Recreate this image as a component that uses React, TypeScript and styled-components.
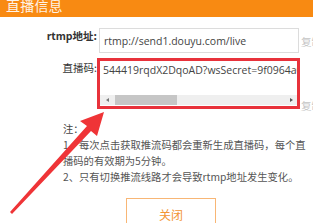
import React from "react";
import styled, { createGlobalStyle } from "styled-components";

const Global = createGlobalStyle`
  html, body { margin: 0; padding: 0; background: #fff; }
  body { width: 313px; height: 223px; overflow: hidden; }
  * { box-sizing: border-box; }
`;

const Page = styled.div`
  position: relative;
  width: 313px;
  height: 223px;
  overflow: hidden;
  background: #fff;
  font-family: "Noto Sans CJK SC", "Open Sans", sans-serif;
`;

const Header = styled.div`
  height: 17px;
  background: #f88a12;
  display: flex;
  align-items: flex-end;
  padding: 0 0 5px 6px;
  overflow: hidden;
`;

const HeaderTitle = styled.span`
  color: #fff3e6;
  font-size: 14px;
  line-height: 14px;
  letter-spacing: 0.2px;
`;

const Form = styled.div`
  display: grid;
  grid-template-columns: 97px 200px 16px;
  column-gap: 2px;
  row-gap: 7px;
  margin-top: 11px;
`;

const Label = styled.div<{ $bold?: boolean }>`
  text-align: right;
  font-size: 10.5px;
  line-height: 14px;
  padding-top: 1px;
  color: #333;
  font-weight: ${(p) => (p.$bold ? 700 : 400)};
  white-space: nowrap;
`;

const Input = styled.div`
  height: 25px;
  border: 1px solid #dcdcdc;
  padding: 0 4px;
  display: flex;
  align-items: center;
  font-family: "Open Sans", "Noto Sans CJK SC", sans-serif;
  font-size: 10.5px;
  color: #444;
  white-space: nowrap;
  overflow: hidden;
`;

const TextArea = styled.div`
  height: 47px;
  border: 1px solid #dcdcdc;
  display: flex;
  flex-direction: column;
  justify-content: space-between;
  overflow: hidden;
`;

const AreaText = styled.div`
  padding: 2px 3px 0;
  font-family: "Open Sans", "Noto Sans CJK SC", sans-serif;
  font-size: 10.5px;
  color: #444;
  white-space: nowrap;
  overflow: hidden;
`;

const ScrollBar = styled.div`
  height: 10px;
  margin-bottom: 1px;
  display: flex;
  align-items: stretch;
  background: #efefef;
`;

const ScrollButton = styled.div<{ $dir: "left" | "right" }>`
  width: 14px;
  display: flex;
  align-items: center;
  justify-content: center;
  &::before {
    content: "";
    width: 0;
    height: 0;
    border-top: 2.5px solid transparent;
    border-bottom: 2.5px solid transparent;
    ${(p) =>
      p.$dir === "left"
        ? "border-right: 3px solid #777;"
        : "border-left: 3px solid #555;"}
  }
`;

const ScrollTrack = styled.div`
  flex: 1;
  display: flex;
  align-items: stretch;
  padding: 0 1px;
`;

const ScrollThumb = styled.div`
  width: 62px;
  background: #c6c6c6;
`;

const Copy = styled.div<{ $top: number }>`
  font-size: 10.5px;
  color: #c4c4c4;
  padding-top: ${(p) => p.$top}px;
  white-space: nowrap;
`;

const Notes = styled.div`
  margin: 8px 0 0 63px;
  width: 246px;
  font-size: 10.3px;
  line-height: 16px;
  color: #555;
`;

const NoteTitle = styled.div`
  color: #444;
`;

const Footer = styled.div`
  display: flex;
  padding-left: 126px;
  margin-top: 13px;
`;

const CloseButton = styled.button`
  width: 90px;
  height: 32px;
  border: 1px solid #f8b675;
  background: #fff;
  color: #f39533;
  font-family: "Noto Sans CJK SC", sans-serif;
  font-size: 12px;
  padding: 0;
`;

const Highlight = styled.div`
  position: absolute;
  left: 97px;
  top: 58px;
  width: 203px;
  height: 51px;
  border: 3px solid #e8323b;
  pointer-events: none;
`;

const ArrowSvg = styled.svg`
  position: absolute;
  left: 0;
  top: 0;
  pointer-events: none;
`;

export default function App() {
  return (
    <Page>
      <Global />
      <Header>
        <HeaderTitle>直播信息</HeaderTitle>
      </Header>
      <Form>
        <Label $bold>rtmp地址:</Label>
        <Input>rtmp://send1.douyu.com/live</Input>
        <Copy $top={6}>复制</Copy>
        <Label>直播码:</Label>
        <TextArea>
          <AreaText>544419rqdX2DqoAD?wsSecret=9f0964a0c1</AreaText>
          <ScrollBar>
            <ScrollButton $dir="left" />
            <ScrollTrack>
              <ScrollThumb />
            </ScrollTrack>
            <ScrollButton $dir="right" />
          </ScrollBar>
        </TextArea>
        <Copy $top={38}>复制</Copy>
      </Form>
      <Notes>
        <NoteTitle>注：</NoteTitle>
        <div>1、每次点击获取推流码都会重新生成直播码，每个直播码的有效期为5分钟。</div>
        <div>2、只有切换推流线路才会导致rtmp地址发生变化。</div>
      </Notes>
      <Footer>
        <CloseButton>关闭</CloseButton>
      </Footer>
      <Highlight />
      <ArrowSvg width="313" height="223" viewBox="0 0 313 223">
        <polygon
          points="10,212 12,214 91,131 97,136 104,112 80,121 87,126"
          fill="#ef3437"
        />
      </ArrowSvg>
    </Page>
  );
}
